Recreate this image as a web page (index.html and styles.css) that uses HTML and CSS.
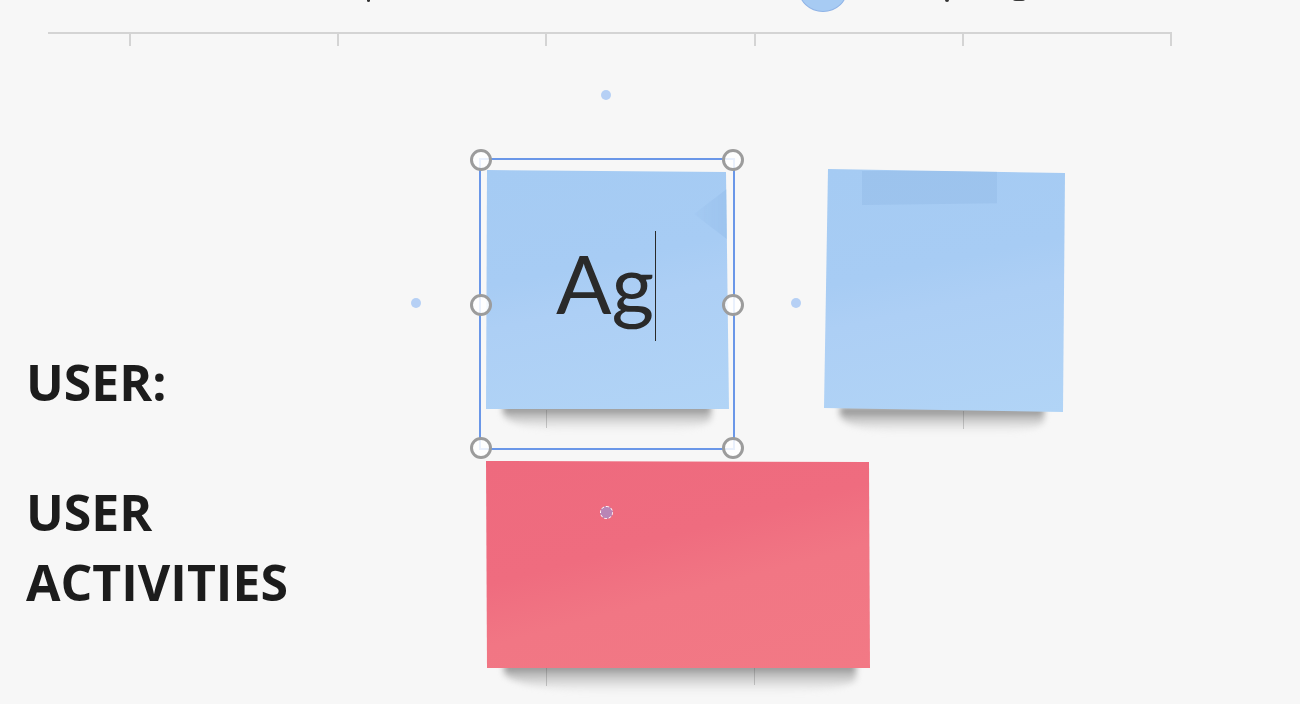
FILE: index.html
```html
<!DOCTYPE html>
<html>
<head>
<meta charset="utf-8">
<link rel="stylesheet" href="styles.css">
</head>
<body>
<div class="board">
  <div class="top-bubble"></div>
  <span class="top-mark m1"></span>
  <span class="top-mark m2"></span>
  <span class="top-mark m3"></span>

  <div class="ruler">
    <span class="tick"></span><span class="tick"></span><span class="tick"></span>
    <span class="tick"></span><span class="tick"></span><span class="tick"></span>
  </div>

  <span class="ghost-tick" style="left:546px;top:410px"></span>
  <span class="ghost-tick" style="left:963px;top:411px"></span>
  <span class="ghost-tick" style="left:546px;top:668px"></span>
  <span class="ghost-tick" style="left:754px;top:667px"></span>

  <div class="labels">
    <div class="label label-user">USER:</div>
    <div class="label label-acts">USER<br>ACTIVITIES</div>
  </div>

  <div class="shadow sh1"></div>
  <div class="shadow sh2"></div>
  <div class="shadow sh3"></div>

  <div class="sticky blue s1">
    <div class="fold"></div>
    <div class="sticky-text">Ag<span class="caret"></span></div>
  </div>
  <div class="sticky blue s2">
    <div class="tape"></div>
  </div>
  <div class="sticky red s3"></div>

  <div class="selection">
    <span class="handle h-tl"></span>
    <span class="handle h-tr"></span>
    <span class="handle h-ml"></span>
    <span class="handle h-mr"></span>
    <span class="handle h-bl"></span>
    <span class="handle h-br"></span>
  </div>

  <span class="conn-dot" style="left:601px;top:90px"></span>
  <span class="conn-dot" style="left:411px;top:298px"></span>
  <span class="conn-dot" style="left:791px;top:298px"></span>

  <span class="cursor-dot"></span>
</div>
</body>
</html>
```

FILE: styles.css
```css
html, body {
  margin: 0;
  padding: 0;
  background: #f7f7f7;
}

.board {
  position: relative;
  width: 1300px;
  height: 704px;
  overflow: hidden;
  background: #f7f7f7;
}

.top-bubble {
  position: absolute;
  left: 798px;
  top: -36px;
  width: 48px;
  height: 46px;
  border-radius: 50%;
  background: #a7cbf3;
  border: 1px solid #8fb3e6;
}

.top-mark {
  position: absolute;
  top: -3px;
  background: #333;
  border-radius: 2px;
}
.m1 { left: 367px; width: 3px; height: 5px; }
.m2 { left: 945px; width: 4px; height: 5px; }
.m3 { left: 1012px; width: 14px; height: 4px; border-radius: 0 0 7px 7px; background: #3a3a3a; }

.ruler {
  position: absolute;
  left: 48px;
  top: 32px;
  width: 1124px;
  height: 2px;
  background: #d4d4d4;
}
.tick {
  position: absolute;
  top: 0;
  width: 2px;
  height: 14px;
  background: #d4d4d4;
}
.tick:nth-child(1) { left: 81px; }
.tick:nth-child(2) { left: 289px; }
.tick:nth-child(3) { left: 497px; }
.tick:nth-child(4) { left: 706px; }
.tick:nth-child(5) { left: 914px; }
.tick:nth-child(6) { left: 1122px; }

.ghost-tick {
  position: absolute;
  width: 1px;
  height: 18px;
  background: #c4c4c4;
}

.labels {
  position: absolute;
  left: 26px;
  top: 347px;
  font-family: "Open Sans", sans-serif;
  font-weight: 700;
  font-size: 50px;
  color: #1c1c1c;
  line-height: 70px;
}
.label-acts {
  margin-top: 60px;
}

.shadow {
  position: absolute;
  background: linear-gradient(to bottom, rgba(80,80,80,0.75), rgba(130,130,130,0.45) 40%, rgba(190,190,190,0.2) 80%, rgba(220,220,220,0));
  filter: blur(3px);
  border-radius: 0 0 25% 35% / 0 0 50% 70%;
}
.sh1 { left: 503px; top: 405px; width: 208px; height: 26px; }
.sh2 { left: 840px; top: 407px; width: 204px; height: 26px; }
.sh3 { left: 504px; top: 663px; width: 352px; height: 30px; }

.sticky {
  position: absolute;
}
.blue {
  background: linear-gradient(168deg, #a5cbf3 0%, #a7ccf4 40%, #adcff5 55%, #b1d4f6 100%);
}
.red {
  background: linear-gradient(165deg, #ee6a7e 0%, #ef6c7f 40%, #f17684 60%, #f27985 100%);
}
.s1 {
  left: 486px;
  top: 170px;
  width: 243px;
  height: 240px;
  clip-path: polygon(1px 0, 240px 2px, 243px 239px, 0 239px);
}
.s2 {
  left: 824px;
  top: 169px;
  width: 241px;
  height: 243px;
  clip-path: polygon(4px 0, 241px 4px, 239px 243px, 0 239px);
}
.s3 {
  left: 486px;
  top: 461px;
  width: 384px;
  height: 207px;
  clip-path: polygon(0 0, 383px 1px, 384px 207px, 1px 207px);
}

.fold {
  position: absolute;
  left: 208px;
  top: 18px;
  width: 34px;
  height: 52px;
  background: linear-gradient(to right, rgba(152,192,236,0.15), rgba(152,192,236,0.7));
  clip-path: polygon(100% 0, 0 50%, 100% 100%);
  filter: blur(1px);
}

.tape {
  position: absolute;
  left: 38px;
  top: 2px;
  width: 135px;
  height: 34px;
  background: rgba(140, 180, 225, 0.35);
  clip-path: polygon(0 0, 100% 0, 100% 95%, 0 100%);
}

.sticky-text {
  position: absolute;
  left: 70px;
  top: 52px;
  font-family: Lato, sans-serif;
  font-size: 82px;
  line-height: 120px;
  color: #2a2a2a;
  display: flex;
  align-items: center;
}
.caret {
  display: inline-block;
  width: 1px;
  height: 110px;
  background: #2a2a2a;
  margin-left: 1px;
  position: relative;
  top: 4px;
}

.selection {
  position: absolute;
  left: 479px;
  top: 158px;
  width: 252px;
  height: 288px;
  border: 2px solid #6a97e8;
}
.handle {
  position: absolute;
  width: 22px;
  height: 22px;
  border-radius: 50%;
  border: 3px solid #9c9c9c;
  background: rgba(255,255,255,0.85);
  box-sizing: border-box;
  margin-left: -11px;
  margin-top: -11px;
}
.h-tl { left: 0; top: 0; }
.h-tr { left: 100%; top: 0; }
.h-ml { left: 0; top: 145px; }
.h-mr { left: 100%; top: 145px; }
.h-bl { left: 0; top: 100%; }
.h-br { left: 100%; top: 100%; }

.conn-dot {
  position: absolute;
  width: 10px;
  height: 10px;
  border-radius: 50%;
  background: #b6d0f5;
}

.cursor-dot {
  position: absolute;
  left: 600px;
  top: 506px;
  width: 13px;
  height: 13px;
  border-radius: 50%;
  background: #b985b6;
  border: 1px dashed #ffffff;
  box-sizing: border-box;
}
```
